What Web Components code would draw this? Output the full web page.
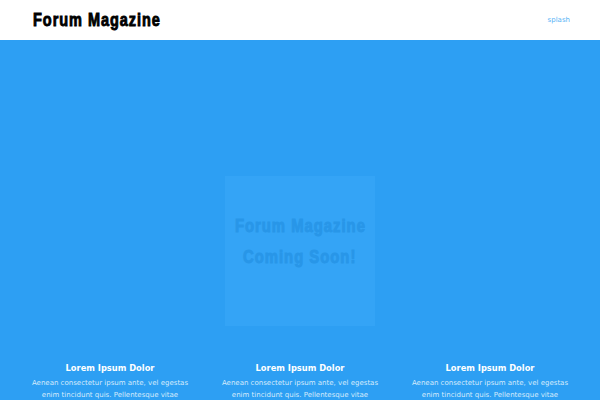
<!DOCTYPE html>
<html>
<head>
<meta charset="utf-8">
<title>Forum Magazine</title>
<style>
  html, body { margin: 0; height: 100%; overflow: hidden; background: #2d9ff3; }
</style>
</head>
<body>
<site-page></site-page>

<template id="site-header-tmpl">
  <style>
    :host { display: flex; align-items: center; justify-content: space-between; height: 40px; padding: 0 30px 0 33px; background: #fff; }
    .logo { display: inline-block; transform: scaleX(.805); transform-origin: left center; white-space: nowrap; font: bold 18px/1 "Liberation Sans", sans-serif; letter-spacing: 1.2px; color: #000; -webkit-text-stroke: .9px #000; }
    a { font: 7px "DejaVu Sans", sans-serif; color: #58b3f6; text-decoration: none; }
  </style>
  <span class="logo"><slot name="logo"></slot></span>
  <a href="#"><slot name="link"></slot></a>
</template>

<template id="coming-box-tmpl">
  <style>
    :host { display: flex; flex: none; flex-direction: column; align-items: center; box-sizing: border-box; width: 150px; height: 150px; padding-top: 39px; gap: 9px; background: #34a4f6; color: #2896e8; font: bold 18px/22px "Liberation Sans", sans-serif; letter-spacing: 1.2px; -webkit-text-stroke: .9px #2896e8; white-space: nowrap; }
    ::slotted(span) { display: inline-block; transform: scaleX(.825); }
  </style>
  <slot></slot>
</template>

<template id="info-col-tmpl">
  <style>
    :host { display: block; width: 190px; text-align: center; color: #fff; font-family: "DejaVu Sans", sans-serif; }
    h3 { margin: 0 0 2px; font-size: 8.3px; line-height: 14px; font-weight: bold; }
    p { margin: 0; padding: 0 16px; font-size: 7px; line-height: 12px; color: #d5ebfc; }
  </style>
  <h3><slot name="title"></slot></h3>
  <p><slot></slot></p>
</template>

<template id="site-page-tmpl">
  <style>
    :host { display: block; height: 400px; overflow: hidden; }
    main { display: flex; flex-direction: column; align-items: center; height: 360px; padding-top: 136px; box-sizing: border-box; background: #2d9ff3; }
    .cols { display: flex; flex: none; justify-content: center; margin-top: 35px; }
  </style>
  <site-header><span slot="logo">Forum Magazine</span><span slot="link">splash</span></site-header>
  <main>
    <coming-box><span>Forum Magazine</span><span>Coming Soon!</span></coming-box>
    <div class="cols">
      <info-col><span slot="title">Lorem Ipsum Dolor</span>Aenean consectetur ipsum ante, vel egestas enim tincidunt quis. Pellentesque vitae</info-col>
      <info-col><span slot="title">Lorem Ipsum Dolor</span>Aenean consectetur ipsum ante, vel egestas enim tincidunt quis. Pellentesque vitae</info-col>
      <info-col><span slot="title">Lorem Ipsum Dolor</span>Aenean consectetur ipsum ante, vel egestas enim tincidunt quis. Pellentesque vitae</info-col>
    </div>
  </main>
</template>

<script>
  function register(name) {
    customElements.define(name, class extends HTMLElement {
      constructor() {
        super();
        const tmpl = document.getElementById(name + '-tmpl');
        this.attachShadow({ mode: 'open' }).append(tmpl.content.cloneNode(true));
      }
    });
  }
  ['site-header', 'coming-box', 'info-col', 'site-page'].forEach(register);
</script>
</body>
</html>
